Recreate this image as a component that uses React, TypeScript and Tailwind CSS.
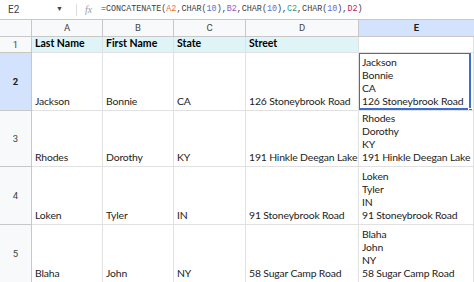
import React from "react";

type Row = {
  num: number;
  h: string;
  last: string;
  first: string;
  state: string;
  street: string;
};

const rows: Row[] = [
  { num: 2, h: "h-[58px]", last: "Jackson", first: "Bonnie", state: "CA", street: "126 Stoneybrook Road" },
  { num: 3, h: "h-[56px]", last: "Rhodes", first: "Dorothy", state: "KY", street: "191 Hinkle Deegan Lake" },
  { num: 4, h: "h-[58px]", last: "Loken", first: "Tyler", state: "IN", street: "91 Stoneybrook Road" },
  { num: 5, h: "h-[58px]", last: "Blaha", first: "John", state: "NY", street: "58 Sugar Camp Road" },
];

const cols = "grid grid-cols-[32px_71px_71px_72px_113px_115px]";
const cell = "border-r border-b border-[#e1e1e1] px-[3px] flex items-end pb-[2px] whitespace-nowrap overflow-hidden";

function FormulaBar() {
  return (
    <div className="flex h-[20px] items-center border-b border-[#c7c7c7] bg-white font-['Roboto',sans-serif]">
      <div className="w-[56px] pl-[8px] text-[10px] text-[#3c4043]">E2</div>
      <div className="w-[16px] text-[7px] text-[#444]">▼</div>
      <div className="mx-[4px] h-[12px] w-px bg-[#dadce0]" />
      <div className="w-[18px] pl-[4px] font-['Liberation_Serif',serif] text-[10px] italic text-[#9aa0a6]">fx</div>
      <div className="pl-[2px] font-['Liberation_Mono',monospace] text-[8.4px] text-[#3c4043]">
        =CONCATENATE(<span className="text-[#e8711c]">A2</span>,CHAR(<span className="text-[#5b6fd1]">10</span>),
        <span className="text-[#8e59c4]">B2</span>,CHAR(<span className="text-[#5b6fd1]">10</span>),
        <span className="text-[#1f9e8f]">C2</span>,CHAR(<span className="text-[#5b6fd1]">10</span>),
        <span className="text-[#c2185b]">D2</span>)
      </div>
    </div>
  );
}

export default function App() {
  return (
    <div className="h-[282px] w-[474px] overflow-hidden bg-white">
      <FormulaBar />
      {/* column letters */}
      <div className={`${cols} h-[17px] font-['Roboto',sans-serif] text-[9.5px] text-[#444]`}>
        <div className="border-r border-b border-[#c7c7c7] bg-[#f8f9fa]" />
        {["A", "B", "C", "D"].map((c) => (
          <div key={c} className="flex items-center justify-center border-r border-b border-[#c7c7c7] bg-[#f8f9fa]">
            {c}
          </div>
        ))}
        <div className="flex items-center justify-center border-b border-[#c7c7c7] bg-[#d3e3fd] font-bold text-[#1f1f1f]">E</div>
      </div>
      {/* header row */}
      <div className={`${cols} h-[16px] font-['Lato',sans-serif] text-[10.5px] leading-[13px] font-bold text-black`}>
        <div className="flex items-center justify-center border-r border-b border-[#c7c7c7] bg-[#f8f9fa] font-['Roboto',sans-serif] text-[9.5px] font-normal text-[#444]">
          1
        </div>
        <div className={`${cell} items-center bg-[#dff4f6] pb-0`}>Last Name</div>
        <div className={`${cell} items-center bg-[#dff4f6] pb-0`}>First Name</div>
        <div className={`${cell} items-center bg-[#dff4f6] pb-0`}>State</div>
        <div className={`${cell} items-center bg-[#dff4f6] pb-0`}>Street</div>
        <div className={`${cell} bg-white`} />
      </div>
      {rows.map((r) => {
        const sel = r.num === 2;
        return (
          <div
            key={r.num}
            className={`${cols} ${r.h} font-['Lato',sans-serif] text-[10.4px] leading-[13px] tracking-[-0.15px] text-[#222]`}
          >
            <div
              className={`flex items-center justify-center border-r border-b border-[#c7c7c7] font-['Roboto',sans-serif] text-[9.5px] tracking-normal ${
                sel ? "bg-[#d3e3fd] font-bold text-[#1f1f1f]" : "bg-[#f8f9fa] text-[#444]"
              }`}
            >
              {r.num}
            </div>
            <div className={cell}>{r.last}</div>
            <div className={cell}>{r.first}</div>
            <div className={cell}>{r.state}</div>
            <div className={cell}>{r.street}</div>
            <div className={`${cell} relative`}>
              <div className="flex flex-col">
                <span>{r.last}</span>
                <span>{r.first}</span>
                <span>{r.state}</span>
                <span>{r.street}</span>
              </div>
              {sel && (
                <>
                  <div className="pointer-events-none absolute -left-px -top-px bottom-0 right-[2px] border-2 border-[#3b6fc9]" />
                  <div className="absolute bottom-[-3px] right-0 h-[5px] w-[5px] border border-white bg-[#3b6fc9]" />
                </>
              )}
            </div>
          </div>
        );
      })}
    </div>
  );
}
